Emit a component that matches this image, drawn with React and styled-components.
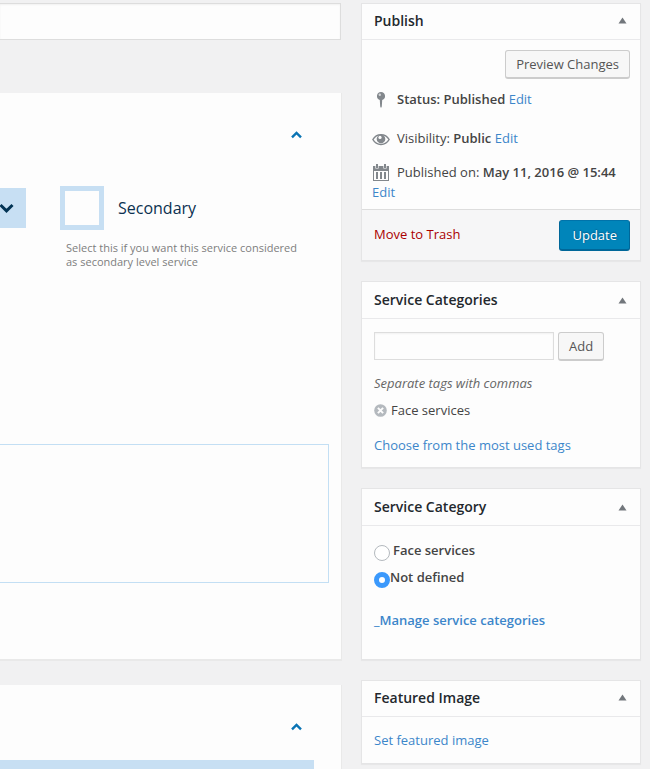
import React from "react";
import styled, { createGlobalStyle } from "styled-components";

const GlobalStyle = createGlobalStyle`
  *, *::before, *::after { box-sizing: border-box; }
  body {
    margin: 0;
    background: #f1f1f2;
    color: #444;
    font: 13px/20px "Open Sans", sans-serif;
  }
  button, input, textarea { font: inherit; color: inherit; }
`;

const Page = styled.div`
  display: grid;
  grid-template-columns: minmax(0, 1fr) 280px;
  gap: 20px;
  min-height: 100vh;
  padding: 3px 9px 0 0;
`;

const Main = styled.main`
  display: flex;
  flex-direction: column;
`;

const TitleInput = styled.input`
  width: 100%;
  height: 37px;
  margin: 0 0 53px;
  padding: 3px 8px;
  border: 1px solid #ddd;
  border-left: 0;
  background: #fdfdfd;
  box-shadow: inset 0 1px 2px rgba(0, 0, 0, 0.05);
  font-size: 16px;
`;

const Panel = styled.section`
  display: flex;
  flex-direction: column;
  flex: ${(p) => (p.$fill ? "1 0 auto" : "0 0 auto")};
  padding: 38px 12px ${(p) => (p.$fill ? "0" : "76px")} 0;
  margin-bottom: ${(p) => (p.$fill ? "0" : "24px")};
  background: #fdfdfd;
  border-bottom: ${(p) => (p.$fill ? "0" : "2px solid #e9e9e9")};
  box-shadow: 1px 0 0 #e9e9e9;
`;

const Collapse = styled.button`
  display: flex;
  align-self: flex-end;
  margin-right: 27px;
  padding: 0;
  border: 0;
  background: none;
  color: #0a74b4;
  cursor: pointer;
`;

const Fields = styled.div`
  display: flex;
  gap: 34px;
  margin-top: 47px;
`;

const DropButton = styled.button`
  display: flex;
  align-items: center;
  width: 26px;
  height: 40px;
  margin-top: 2px;
  padding: 0;
  border: 0;
  background: #c7dff3;
  color: #023354;
`;

const CheckLabel = styled.label`
  display: flex;
  align-items: center;
  gap: 14px;
  color: #0b3150;
  font-size: 16px;
`;

const BigCheck = styled.input`
  appearance: none;
  width: 44px;
  height: 44px;
  margin: 0;
  border: 5px solid #c7dff3;
  background: #fdfdfd;
  &:checked { background: #0a74b4; }
`;

const Help = styled.p`
  max-width: 240px;
  margin: 11px 0 0 6px;
  color: #7d7d7d;
  font-size: 11px;
  line-height: 14px;
`;

const Notes = styled.textarea`
  display: block;
  width: 100%;
  height: 139px;
  margin-top: 175px;
  padding: 8px;
  border: 1px solid #c3dff4;
  border-left: 0;
  background: #fdfdfd;
  resize: none;
`;

const BlueBar = styled.div`
  flex: 1;
  min-height: 9px;
  margin: 29px 15px 0 0;
  background: #c7dff3;
`;

const Side = styled.aside`
  display: flex;
  flex-direction: column;
  gap: 20px;
`;

const Box = styled.section`
  border: 1px solid #e5e5e6;
  background: #fdfdfd;
  box-shadow: 0 1px 1px rgba(0, 0, 0, 0.04);
`;

const BoxHead = styled.header`
  display: flex;
  align-items: center;
  justify-content: space-between;
  height: ${(p) => (p.$tall ? "37px" : "36px")};
  padding: ${(p) => (p.$tall ? "0 12px" : "0 12px 2px")};
  border-bottom: 1px solid #e9e9eb;
`;

const BoxTitle = styled.h2`
  margin: 0;
  color: #23282d;
  font-size: 14px;
  font-weight: 600;
  line-height: 20px;
`;

const Toggle = styled.button`
  display: flex;
  padding: 0;
  margin-right: 1px;
  border: 0;
  background: none;
  color: #72777c;
`;

const BoxBody = styled.div`
  padding: ${(p) => p.$pad};
`;

const Button = styled.button`
  height: 29px;
  padding: 0 10px 1px;
  border: 1px solid #ccc;
  border-bottom: 2px solid #ccc;
  border-radius: 3px;
  background: #f7f7f7;
  color: #555;
  line-height: 26px;
  white-space: nowrap;
`;

const PrimaryButton = styled(Button)`
  height: 31px;
  padding: 0 12px;
  border-color: #0073aa #006799 #006799;
  background: #0085ba;
  color: #fff;
  text-shadow: 0 -1px 1px #006799, 1px 0 1px #006799;
`;

const PreviewRow = styled.div`
  display: flex;
  justify-content: flex-end;
`;

const Misc = styled.div`
  margin-top: ${(p) => p.$gap};
  strong { font-weight: 600; }
  svg {
    display: inline-block;
    width: 18px;
    height: 18px;
    margin-right: 7px;
    vertical-align: -5px;
    color: #82878c;
  }
`;

const Link = styled.a`
  color: ${(p) => (p.$danger ? "#a00" : "#3c86ca")};
  font-weight: ${(p) => (p.$strong ? 600 : 400)};
  text-decoration: none;
`;

const Actions = styled.footer`
  display: flex;
  align-items: center;
  justify-content: space-between;
  padding: 10px 10px 9px 12px;
  border-top: 1px solid #ddd;
  background: #f6f6f7;
  a { padding-bottom: 4px; }
`;

const AddRow = styled.div`
  display: flex;
  gap: 4px;
  align-items: flex-start;
`;

const TagInput = styled.input`
  width: 180px;
  height: 28px;
  padding: 3px 5px;
  border: 1px solid #ddd;
  background: #fdfdfd;
  box-shadow: inset 0 1px 2px rgba(0, 0, 0, 0.05);
`;

const Hint = styled.p`
  margin: 12px 0 7px;
  color: #666;
  font-style: italic;
`;

const Tag = styled.div`
  display: flex;
  align-items: center;
  gap: 4px;
  margin-bottom: 15px;
`;

const TagRemove = styled.button`
  display: flex;
  padding: 0;
  border: 0;
  background: none;
  color: #b4b9be;
`;

const RadioRow = styled.label`
  display: flex;
  align-items: flex-start;
  gap: ${(p) => (p.$tight ? "0" : "3px")};
  margin-bottom: 6px;
  font-weight: 600;
`;

const Radio = styled.input.attrs({ type: "radio" })`
  appearance: none;
  width: 16px;
  height: 16px;
  margin: 5px 0 0;
  border: 1px solid #b4b9be;
  border-radius: 50%;
  background: #fff;
  &:checked {
    border: 5px solid #3b99fc;
  }
`;

const Last = styled.div`
  margin-top: 22px;
`;

const ChevronUp = () => (
  <svg width="11" height="8" viewBox="0 0 11 8" fill="none" stroke="currentColor" strokeWidth="2.4" aria-hidden="true">
    <path d="M1 6.4 5.5 2 10 6.4" />
  </svg>
);

const ChevronDown = () => (
  <svg width="14" height="10" viewBox="0 0 14 10" fill="none" stroke="currentColor" strokeWidth="3" aria-hidden="true">
    <path d="M.5 2 6.5 7.8 12.5 2" />
  </svg>
);

const PinIcon = () => (
  <svg viewBox="0 0 18 18" aria-hidden="true">
    <path fill="currentColor" d="M9 1a4.1 4.1 0 0 1 1.2 8L9.8 15.5 9 17l-.8-1.5L7.8 9A4.1 4.1 0 0 1 9 1z" />
    <circle cx="7.8" cy="3.8" r="1.2" fill="#d5d7d9" />
  </svg>
);

const EyeIcon = () => (
  <svg viewBox="0 0 18 18" aria-hidden="true">
    <path fill="none" stroke="currentColor" strokeWidth="1.5" d="M.9 9.5C4.5 3 13.5 3 17.1 9.5 13.5 16 4.5 16 .9 9.5z" />
    <circle cx="9" cy="9" r="4.3" fill="currentColor" />
    <circle cx="8" cy="7.4" r="1.6" fill="#fdfdfd" />
  </svg>
);

const CalendarIcon = () => (
  <svg viewBox="0 0 18 18" aria-hidden="true">
    <path fill="currentColor" fillRule="evenodd" d="M1 2h16v15H1zM2 7v9h14V7z" />
    <path fill="#fdfdfd" d="M3.4 1h3.2v3.5H3.400zM11.400 1h3.200v3.500h-3.200z" />
    <path fill="currentColor" d="M4 0h2v4H4zM12 0h2v4h-2zM4 8h2v7H4zM8 8h2v7H8zM12 8h2v7h-2z" />
  </svg>
);

const RemoveIcon = () => (
  <svg width="13" height="13" viewBox="0 0 13 13" aria-hidden="true">
    <circle cx="6.5" cy="6.5" r="6.3" fill="currentColor" />
    <path d="m3.9 3.9 5.2 5.2M9.1 3.9 3.9 9.1" stroke="#fdfdfd" strokeWidth="2" />
  </svg>
);

function SideBox({ title, tall, children }) {
  return (
    <Box>
      <BoxHead $tall={tall}>
        <BoxTitle>{title}</BoxTitle>
        <Toggle type="button" aria-label={`Toggle ${title}`}>
          <svg width="9" height="7" viewBox="0 0 9 7" aria-hidden="true">
            <path d="M4.5 .5 8.5 6.5H.5z" fill="currentColor" />
          </svg>
        </Toggle>
      </BoxHead>
      {children}
    </Box>
  );
}

export default function App() {
  return (
    <>
      <GlobalStyle />
      <Page>
        <Main>
          <TitleInput type="text" aria-label="Title" />
          <Panel>
            <Collapse type="button" aria-label="Collapse section"><ChevronUp /></Collapse>
            <Fields>
              <DropButton type="button" aria-label="Open list"><ChevronDown /></DropButton>
              <div>
                <CheckLabel>
                  <BigCheck type="checkbox" />
                  Secondary
                </CheckLabel>
                <Help>Select this if you want this service considered as secondary level service</Help>
              </div>
            </Fields>
            <Notes aria-label="Description" />
          </Panel>
          <Panel $fill>
            <Collapse type="button" aria-label="Collapse section"><ChevronUp /></Collapse>
            <BlueBar />
          </Panel>
        </Main>

        <Side>
          <SideBox title="Publish">
            <BoxBody $pad="10px 10px 7px">
              <PreviewRow><Button type="button">Preview Changes</Button></PreviewRow>
              <Misc $gap="10px">
                <PinIcon /><strong>Status: Published</strong> <Link href="#status">Edit</Link>
              </Misc>
              <Misc $gap="19px">
                <EyeIcon />Visibility: <strong>Public</strong> <Link href="#visibility">Edit</Link>
              </Misc>
              <Misc $gap="14px">
                <CalendarIcon />Published on: <strong>May 11, 2016 @ 15:44</strong> <Link href="#date">Edit</Link>
              </Misc>
            </BoxBody>
            <Actions>
              <Link href="#trash" $danger>Move to Trash</Link>
              <PrimaryButton type="submit">Update</PrimaryButton>
            </Actions>
          </SideBox>

          <SideBox title="Service Categories" tall>
            <BoxBody $pad="13px 12px 12px">
              <AddRow>
                <TagInput type="text" aria-label="Add service category" />
                <Button type="button">Add</Button>
              </AddRow>
              <Hint>Separate tags with commas</Hint>
              <Tag>
                <TagRemove type="button" aria-label="Remove Face services"><RemoveIcon /></TagRemove>
                Face services
              </Tag>
              <Link href="#tags">Choose from the most used tags</Link>
            </BoxBody>
          </SideBox>

          <SideBox title="Service Category" tall>
            <BoxBody $pad="14px 12px 29px">
              <RadioRow><Radio name="category" />Face services</RadioRow>
              <RadioRow $tight><Radio name="category" defaultChecked />Not defined</RadioRow>
              <Last><Link href="#manage" $strong>_Manage service categories</Link></Last>
            </BoxBody>
          </SideBox>

          <SideBox title="Featured Image">
            <BoxBody $pad="13px 12px">
              <Link href="#image">Set featured image</Link>
            </BoxBody>
          </SideBox>
        </Side>
      </Page>
    </>
  );
}
